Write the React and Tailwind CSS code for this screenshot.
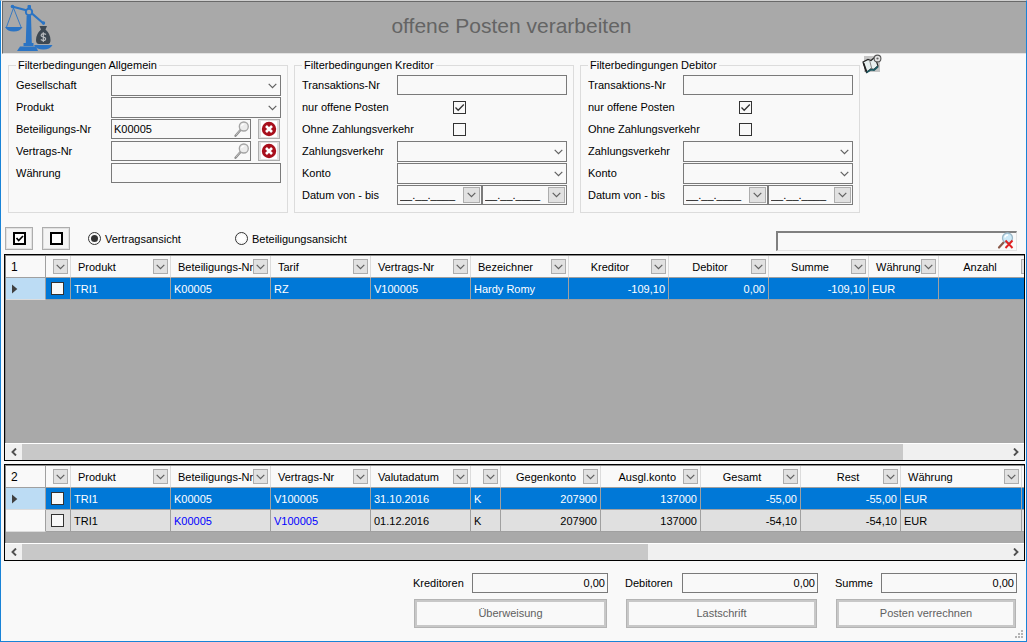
import React from "react";

function Chevron({ className = "" }) {
  return (
    <svg viewBox="0 0 9 6" className={`h-[6px] w-[9px] ${className}`} fill="none" aria-hidden="true">
      <path d="M0.7 0.8 L4.5 4.6 L8.3 0.8" stroke="#606060" strokeWidth="1.2" />
    </svg>
  );
}

function ScalesLogo() {
  return (
    <svg viewBox="0 0 48 48" className="h-12 w-12" aria-hidden="true">
      <g fill="none" stroke="#2b74c4">
        <path d="M7 2.5 L24 7 L38.5 19.5" strokeWidth="2.2" strokeLinecap="round" />
        <path d="M8.5 4 L1.5 23 M8.5 4 L16 23" strokeWidth="0.9" />
      </g>
      <g fill="#2b74c4">
        <rect x="22.5" y="1" width="3.5" height="5" rx="1" />
        <path d="M21.6 12 h4.4 l0.8 27 h-6 z" />
        <path d="M18.5 39 h10 v3 h-10 z" />
        <path d="M15 42.5 h16 l2 4.5 h-21 z" />
        <path d="M0 23 H17.5 Q15 27.5 8.7 27.5 Q2.5 27.5 0 23 z" />
        <path d="M29 41 H47.5 Q45 45.5 38.2 45.5 Q31.5 45.5 29 41 z" />
        <circle cx="7.5" cy="2.5" r="1.8" />
        <circle cx="38.5" cy="19" r="1.7" />
      </g>
      <circle cx="24" cy="8" r="3.2" fill="#a9a9a9" stroke="#2b74c4" strokeWidth="1.9" />
      <path
        d="M34.5 22 L42 22 L40.5 25.5 Q45.5 30 45.5 36 Q45.5 40 43 40 H34 Q31 40 31 36 Q31 30 36 25.5 z"
        fill="#3d4852"
      />
      <path
        d="M41 30.5 Q38.5 28.8 36.6 30.2 Q35.2 32.4 38.3 33 Q41.6 33.8 40.2 36 Q38.2 37.4 35.8 35.6 M38.3 28.2 V38"
        fill="none"
        stroke="#b9bdc0"
        strokeWidth="1.2"
      />
    </svg>
  );
}

function Magnifier({ className = "" }) {
  return (
    <svg viewBox="0 0 16 16" className={`size-4 ${className}`} fill="none" aria-hidden="true">
      <path d="M6.5 9 L1.5 14.8" stroke="#8a8a8a" strokeWidth="2.2" strokeLinecap="round" />
      <path d="M6 9.3 L1.8 14.2" stroke="#d6d6d6" strokeWidth="0.8" />
      <circle cx="9.8" cy="5.5" r="4.5" fill="#ececec" stroke="#a4a4a4" strokeWidth="1.3" />
      <path d="M7.5 5 Q8 3 10.3 3" stroke="#ffffff" strokeWidth="1.2" />
    </svg>
  );
}

function SearchClear() {
  return (
    <svg viewBox="0 0 18 18" className="size-[18px]" fill="none" aria-hidden="true">
      <path d="M7 10 L2 15.5" stroke="#8b5a4a" strokeWidth="2.2" strokeLinecap="round" />
      <circle cx="10.5" cy="6" r="5" fill="#cdeaf8" stroke="#9cb8c8" strokeWidth="1.3" />
      <path d="M7.8 5.5 Q8.5 3 11 3" stroke="#ffffff" strokeWidth="1.4" />
      <path d="M8.5 8.5 L15.5 16 M15.5 8.5 L8.5 16" stroke="#e02020" strokeWidth="1.9" />
    </svg>
  );
}

function ClearIcon() {
  return (
    <svg viewBox="0 0 16 16" className="size-4 bg-white" fill="none" aria-hidden="true">
      <circle cx="8" cy="8" r="7.2" fill="#a80f1c" />
      <path d="M5 5 L11 11 M11 5 L5 11" stroke="#ffffff" strokeWidth="2.6" />
    </svg>
  );
}

function NotebookIcon() {
  return (
    <svg viewBox="0 0 20 20" className="size-5" fill="none" aria-hidden="true">
      <rect x="2" y="2" width="16" height="16" fill="#c4c4c4" />
      <path d="M1 8 L6 5.5 L9 6.5 L13 3 L16 12 L12 15.5 L9 15 L4.5 18.5 z" fill="#e8efef" stroke="#222" strokeWidth="1.2" />
      <path d="M4.5 18.5 L9 15.6 L12 16 L16 12.5" stroke="#1f5a63" strokeWidth="1.8" />
      <path d="M7.5 6 L9.8 14.8" stroke="#777" strokeWidth="0.9" />
      <path d="M1.5 9 L4.5 17.5" stroke="#222" strokeWidth="1.6" />
      <circle cx="15.5" cy="4.5" r="3.4" fill="#e4e4e4" stroke="#555" strokeWidth="1.1" />
      <circle cx="15.5" cy="4.5" r="1.1" fill="#666" />
    </svg>
  );
}

const fieldBox = "border border-[#7a7a7a] bg-[#f9f9f9] outline-none";

function Row({ id, label, children }) {
  return (
    <div className="flex h-[22px] items-start">
      <label htmlFor={id} className="w-[95px] shrink-0 whitespace-nowrap leading-5">
        {label}
      </label>
      <div className="flex min-w-0 flex-1 items-start">{children}</div>
    </div>
  );
}

function SelectRow({ id, label }) {
  return (
    <Row id={id} label={label}>
      <div className="relative w-full">
        <select id={id} className={`block h-[21px] w-full appearance-none pl-1 ${fieldBox}`}>
          <option></option>
        </select>
        <Chevron className="pointer-events-none absolute right-1 top-2" />
      </div>
    </Row>
  );
}

function TextRow({ id, label }) {
  return (
    <Row id={id} label={label}>
      <input id={id} type="text" className={`h-5 w-full px-[3px] ${fieldBox}`} />
    </Row>
  );
}

function LookupRow({ id, label, value }) {
  return (
    <Row id={id} label={label}>
      <div className="relative min-w-0 flex-1">
        <input id={id} type="text" defaultValue={value} className={`block h-5 w-full pl-[2px] pr-5 ${fieldBox}`} />
        <button type="button" aria-label={`${label} suchen`} className="absolute right-px top-[2px]">
          <Magnifier />
        </button>
      </div>
      <button
        type="button"
        aria-label={`${label} leeren`}
        className="ml-[7px] mr-px flex h-5 w-[22px] items-center justify-center border border-[#adadad] bg-[#e1e1e1]"
      >
        <ClearIcon />
      </button>
    </Row>
  );
}

function CheckBox({ id, checked = false, label }) {
  return (
    <span className="relative block size-[13px]">
      <input
        id={id}
        type="checkbox"
        aria-label={label}
        defaultChecked={checked}
        className="peer block size-[13px] appearance-none border border-[#333333] bg-[#f9f9f9]"
      />
      <svg
        viewBox="0 0 13 13"
        className="pointer-events-none absolute inset-0 hidden size-[13px] peer-checked:block"
        fill="none"
        aria-hidden="true"
      >
        <path d="M2.5 6.5 L5.2 9.3 L10.8 3.5" stroke="#333" strokeWidth="1.3" />
      </svg>
    </span>
  );
}

function CheckRow({ id, label, checked }) {
  return (
    <div className="flex h-[22px] items-start">
      <label htmlFor={id} className="w-[151px] whitespace-nowrap leading-5">
        {label}
      </label>
      <div className="pt-1">
        <CheckBox id={id} checked={checked} />
      </div>
    </div>
  );
}

function DateField({ id, label }) {
  return (
    <div className={`flex h-5 min-w-0 flex-1 items-center pr-px ${fieldBox}`}>
      <input
        id={id}
        aria-label={label}
        type="text"
        defaultValue="__.__.____"
        className="h-4 w-full min-w-0 bg-transparent pl-[2px] outline-none"
      />
      <button
        type="button"
        aria-label="Kalender"
        className="flex h-4 w-[17px] shrink-0 items-center justify-center border border-[#adadad] bg-[#e1e1e1]"
      >
        <Chevron />
      </button>
    </div>
  );
}

function FilterBox({ title, children }) {
  return (
    <fieldset className="h-[155px] w-[280px] border border-[#dcdcdc] pl-[7px] pr-[6px]">
      <legend className="px-[2px] leading-[14px]">{title}</legend>
      <div className="pt-[3px]">{children}</div>
    </fieldset>
  );
}

function PartyFilter({ prefix, title }) {
  return (
    <FilterBox title={title}>
      <TextRow id={`${prefix}-ta`} label="Transaktions-Nr" />
      <CheckRow id={`${prefix}-open`} label="nur offene Posten" checked />
      <CheckRow id={`${prefix}-ohne`} label="Ohne Zahlungsverkehr" />
      <SelectRow id={`${prefix}-zv`} label="Zahlungsverkehr" />
      <SelectRow id={`${prefix}-konto`} label="Konto" />
      <Row id={`${prefix}-von`} label="Datum von - bis">
        <DateField id={`${prefix}-von`} label="Datum von" />
        <DateField id={`${prefix}-bis`} label="Datum bis" />
      </Row>
    </FilterBox>
  );
}

function Radio({ label, checked, className = "" }) {
  return (
    <label className={`flex items-center gap-1 ${className}`}>
      <input
        type="radio"
        name="ansicht"
        defaultChecked={checked}
        className="size-[13px] appearance-none rounded-full border border-[#333333] bg-white bg-clip-content p-[2px] checked:bg-[#333333]"
      />
      {label}
    </label>
  );
}

const headAlign = { left: "pl-[7px] text-left", center: "text-center", right: "pr-[7px] text-right", rest: "pl-3 text-center" };

function HeaderCell({ label, align = "left" }) {
  return (
    <th className="h-[22px] border-b border-r border-b-[#a0a0a0] border-r-[#dcdcdc] bg-[#f9f9f9] p-0 font-normal">
      <div className="flex items-center pr-[2px]">
        <span className={`min-w-0 flex-1 whitespace-nowrap ${label ? headAlign[align] : ""}`}>{label}</span>
        <button
          type="button"
          aria-label={`Filter ${label}`}
          className="flex size-[15px] shrink-0 items-center justify-center border border-[#adadad] bg-[#e1e1e1]"
        >
          <Chevron />
        </button>
      </div>
    </th>
  );
}

function DataGrid({ number, columns, rows, tableClass, filler, thumb, rest, className }) {
  return (
    <section className={`ml-[3px] mr-px flex flex-col border border-black bg-[#a9a9a9] ${className}`}>
      <div className="flex-1 overflow-hidden border-l border-t border-[#8a8a8a]">
        <table className={`table-fixed border-separate border-spacing-0 ${tableClass}`}>
          <colgroup>
            <col className="w-10" />
            <col className="w-[25px]" />
            {columns.map((c, i) => (
              <col key={i} className={c.width} />
            ))}
            {filler && <col />}
          </colgroup>
          <thead>
            <tr>
              <th className="h-[22px] border-b border-r border-[#a0a0a0] bg-[#f9f9f9] p-0 pl-[5px] text-left text-xs font-normal">
                {number}
              </th>
              <HeaderCell label="" />
              {columns.map((c, i) => (
                <HeaderCell key={i} label={c.label} align={c.head} />
              ))}
              {filler && <th className="border-b border-[#a0a0a0] bg-[#f9f9f9] p-0"></th>}
            </tr>
          </thead>
          <tbody>
            {rows.map((cells, r) => {
              const active = r === 0;
              const fill = active ? "bg-[#0078d7]" : "bg-[#e0e0e0]";
              const ink = active ? "text-white" : "text-black";
              return (
                <tr key={r}>
                  <td className={`h-[22px] border-b border-r border-b-[#dcdcdc] border-r-[#a0a0a0] p-0 pl-[6px] ${active ? "bg-[#bcdcf4]" : "bg-[#f9f9f9]"}`}>
                    {active && (
                      <svg viewBox="0 0 6 10" className="h-[10px] w-[6px]" aria-hidden="true">
                        <path d="M0 0.5 L5.3 5 L0 9.5 z" fill="#404040" />
                      </svg>
                    )}
                  </td>
                  <td className={`border-b border-r border-[#a0a0a0] p-0 pl-[5px] ${fill}`}>
                    <CheckBox label={`Zeile ${r + 1}`} />
                  </td>
                  {cells.map((v, i) => (
                    <td
                      key={i}
                      className={`border-b border-r border-[#a0a0a0] px-[3px] py-0 whitespace-nowrap ${fill} ${columns[i].num ? "text-right" : "text-left"} ${!active && columns[i].link ? "text-[#0000ff]" : ink}`}
                    >
                      {v}
                    </td>
                  ))}
                  {filler && <td className={`border-b border-[#a0a0a0] p-0 ${fill}`}></td>}
                </tr>
              );
            })}
          </tbody>
        </table>
      </div>
      <div className="flex h-[17px] border-t border-white bg-[#f0f0f0]">
        <button type="button" aria-label="Nach links" className="flex w-[17px] items-center justify-center">
          <svg viewBox="0 0 6 8" className="h-2 w-[6px]" fill="none" aria-hidden="true">
            <path d="M5 0.5 L1.5 4 L5 7.5" stroke="#505050" strokeWidth="1.9" />
          </svg>
        </button>
        <div className={`bg-[#c8c8c8] ${thumb}`}></div>
        <div className={rest}></div>
        <button type="button" aria-label="Nach rechts" className="flex w-[17px] items-center justify-center">
          <svg viewBox="0 0 6 8" className="h-2 w-[6px]" fill="none" aria-hidden="true">
            <path d="M1 0.5 L4.5 4 L1 7.5" stroke="#505050" strokeWidth="1.9" />
          </svg>
        </button>
      </div>
    </section>
  );
}

const contractColumns = [
  { label: "Produkt", width: "w-[100px]" },
  { label: "Beteiligungs-Nr", width: "w-[100px]" },
  { label: "Tarif", width: "w-[100px]" },
  { label: "Vertrags-Nr", width: "w-[100px]" },
  { label: "Bezeichner", width: "w-[98px]" },
  { label: "Kreditor", width: "w-[100px]", head: "center", num: true },
  { label: "Debitor", width: "w-[100px]", head: "center", num: true },
  { label: "Summe", width: "w-[100px]", head: "center", num: true },
  { label: "Währung", width: "w-[70px]" },
  { label: "Anzahl", width: "w-[100px]", head: "center", num: true },
];

const contractRows = [["TRI1", "K00005", "RZ", "V100005", "Hardy Romy", "-109,10", "0,00", "-109,10", "EUR", ""]];

const itemColumns = [
  { label: "Produkt", width: "w-[100px]" },
  { label: "Beteiligungs-Nr", width: "w-[100px]", link: true },
  { label: "Vertrags-Nr", width: "w-[100px]", link: true },
  { label: "Valutadatum", width: "w-[100px]" },
  { label: "", width: "w-[30px]" },
  { label: "Gegenkonto", width: "w-[100px]", head: "right", num: true },
  { label: "Ausgl.konto", width: "w-[100px]", head: "right", num: true },
  { label: "Gesamt", width: "w-[100px]", head: "center", num: true },
  { label: "Rest", width: "w-[100px]", head: "rest", num: true },
  { label: "Währung", width: "w-[121px]" },
];

const itemRows = [
  ["TRI1", "K00005", "V100005", "31.10.2016", "K", "207900", "137000", "-55,00", "-55,00", "EUR"],
  ["TRI1", "K00005", "V100005", "01.12.2016", "K", "207900", "137000", "-54,10", "-54,10", "EUR"],
];

function Total({ id, label, action, className }) {
  return (
    <div className={className}>
      <div className="flex items-center justify-between">
        <label htmlFor={id}>{label}</label>
        <input id={id} type="text" readOnly value="0,00" className={`h-5 w-[136px] px-[2px] text-right ${fieldBox}`} />
      </div>
      <div className="px-px pt-[6px]">
        <button type="button" className="h-[29px] w-full border border-[#b4b4b4] bg-[#c8c8c8] p-[2px] text-[#606060]">
          <span className="flex h-full items-center justify-center bg-[#f9f9f9] pb-px">{action}</span>
        </button>
      </div>
    </div>
  );
}

export default function App() {
  return (
    <div className="relative flex min-h-screen flex-col border border-[#1883d7] border-t-[#d0d0d0] bg-[#f9f9f9] font-['Liberation_Sans',Arial,sans-serif] text-[11px] leading-[14px] text-black">
      <header className="ml-px flex h-[53px] items-center border-b border-l border-t border-b-[#e3e3e3] border-l-[#696969] border-t-[#696969] bg-[#a9a9a9] pl-[2px] pr-[56px]">
        <ScalesLogo />
        <h1 className="flex-1 pb-[3px] text-center text-[21px] leading-7 text-[#646464]">offene Posten verarbeiten</h1>
      </header>

      <div className="flex items-start gap-[6px] pl-[7px] pt-1">
        <FilterBox title="Filterbedingungen Allgemein">
          <SelectRow id="gesellschaft" label="Gesellschaft" />
          <SelectRow id="produkt" label="Produkt" />
          <LookupRow id="beteiligung" label="Beteiligungs-Nr" value="K00005" />
          <LookupRow id="vertrag" label="Vertrags-Nr" value="" />
          <TextRow id="waehrung" label="Währung" />
        </FilterBox>
        <PartyFilter prefix="kred" title="Filterbedingungen Kreditor" />
        <PartyFilter prefix="deb" title="Filterbedingungen Debitor" />
        <button type="button" aria-label="Notizbuch" className="-ml-1 -mt-1">
          <NotebookIcon />
        </button>
      </div>

      <div className="flex h-[41px] items-center pl-1 pr-[9px] pt-[10px]">
        <button
          type="button"
          aria-label="Alle markieren"
          className="flex h-[23px] w-7 items-center justify-center border border-[#adadad] bg-[#f4f4f4] outline outline-1 -outline-offset-2 outline-[#e1e1e1]"
        >
          <svg viewBox="0 0 13 13" className="size-[13px]" fill="none" aria-hidden="true">
            <rect x="1" y="1" width="11" height="11" fill="#fff" stroke="#000" strokeWidth="2" />
            <path d="M3.5 6 L5.7 8.5 L10 4" stroke="#000" strokeWidth="1.7" />
          </svg>
        </button>
        <button
          type="button"
          aria-label="Markierung aufheben"
          className="ml-[9px] flex h-[23px] w-7 items-center justify-center border border-[#adadad] bg-[#f4f4f4] outline outline-1 -outline-offset-2 outline-[#e1e1e1]"
        >
          <svg viewBox="0 0 13 13" className="size-[13px]" fill="none" aria-hidden="true">
            <rect x="1" y="1" width="11" height="11" fill="#fff" stroke="#000" strokeWidth="2" />
          </svg>
        </button>
        <Radio label="Vertragsansicht" checked className="ml-[18px] w-[147px]" />
        <Radio label="Beteiligungsansicht" />
        <div className="relative ml-auto mt-1">
          <input
            type="text"
            aria-label="Suche"
            className="block h-5 w-[241px] border-b border-l-2 border-r border-t-2 border-b-[#e3e3e3] border-l-[#808080] border-r-[#e3e3e3] border-t-[#808080] bg-[#f9f9f9] pl-1 pr-5 outline-none"
          />
          <button type="button" aria-label="Suche leeren" className="absolute right-[2px] top-px">
            <SearchClear />
          </button>
        </div>
      </div>

      <DataGrid
        number="1"
        columns={contractColumns}
        rows={contractRows}
        tableClass="w-[1033px]"
        className="flex-1"
        thumb="flex-[881]"
        rest="flex-[104]"
      />
      <DataGrid
        number="2"
        columns={itemColumns}
        rows={itemRows}
        tableClass="w-full"
        filler
        className="mt-[3px] h-[97px]"
        thumb="flex-[626]"
        rest="flex-[359]"
      />

      <footer className="flex justify-end gap-[17px] pb-[13px] pr-[9px] pt-3">
        <Total id="kreditoren" label="Kreditoren" action="Überweisung" className="w-[195px]" />
        <Total id="debitoren" label="Debitoren" action="Lastschrift" className="w-[193px]" />
        <Total id="summe" label="Summe" action="Posten verrechnen" className="w-[182px]" />
      </footer>

      <svg viewBox="0 0 9 9" className="absolute bottom-[2px] right-[2px] size-[9px]" fill="#b4b4b4" aria-hidden="true">
        <path d="M6 0h2v2h-2z M3 3h2v2h-2z M6 3h2v2h-2z M0 6h2v2h-2z M3 6h2v2h-2z M6 6h2v2h-2z" />
      </svg>
    </div>
  );
}
